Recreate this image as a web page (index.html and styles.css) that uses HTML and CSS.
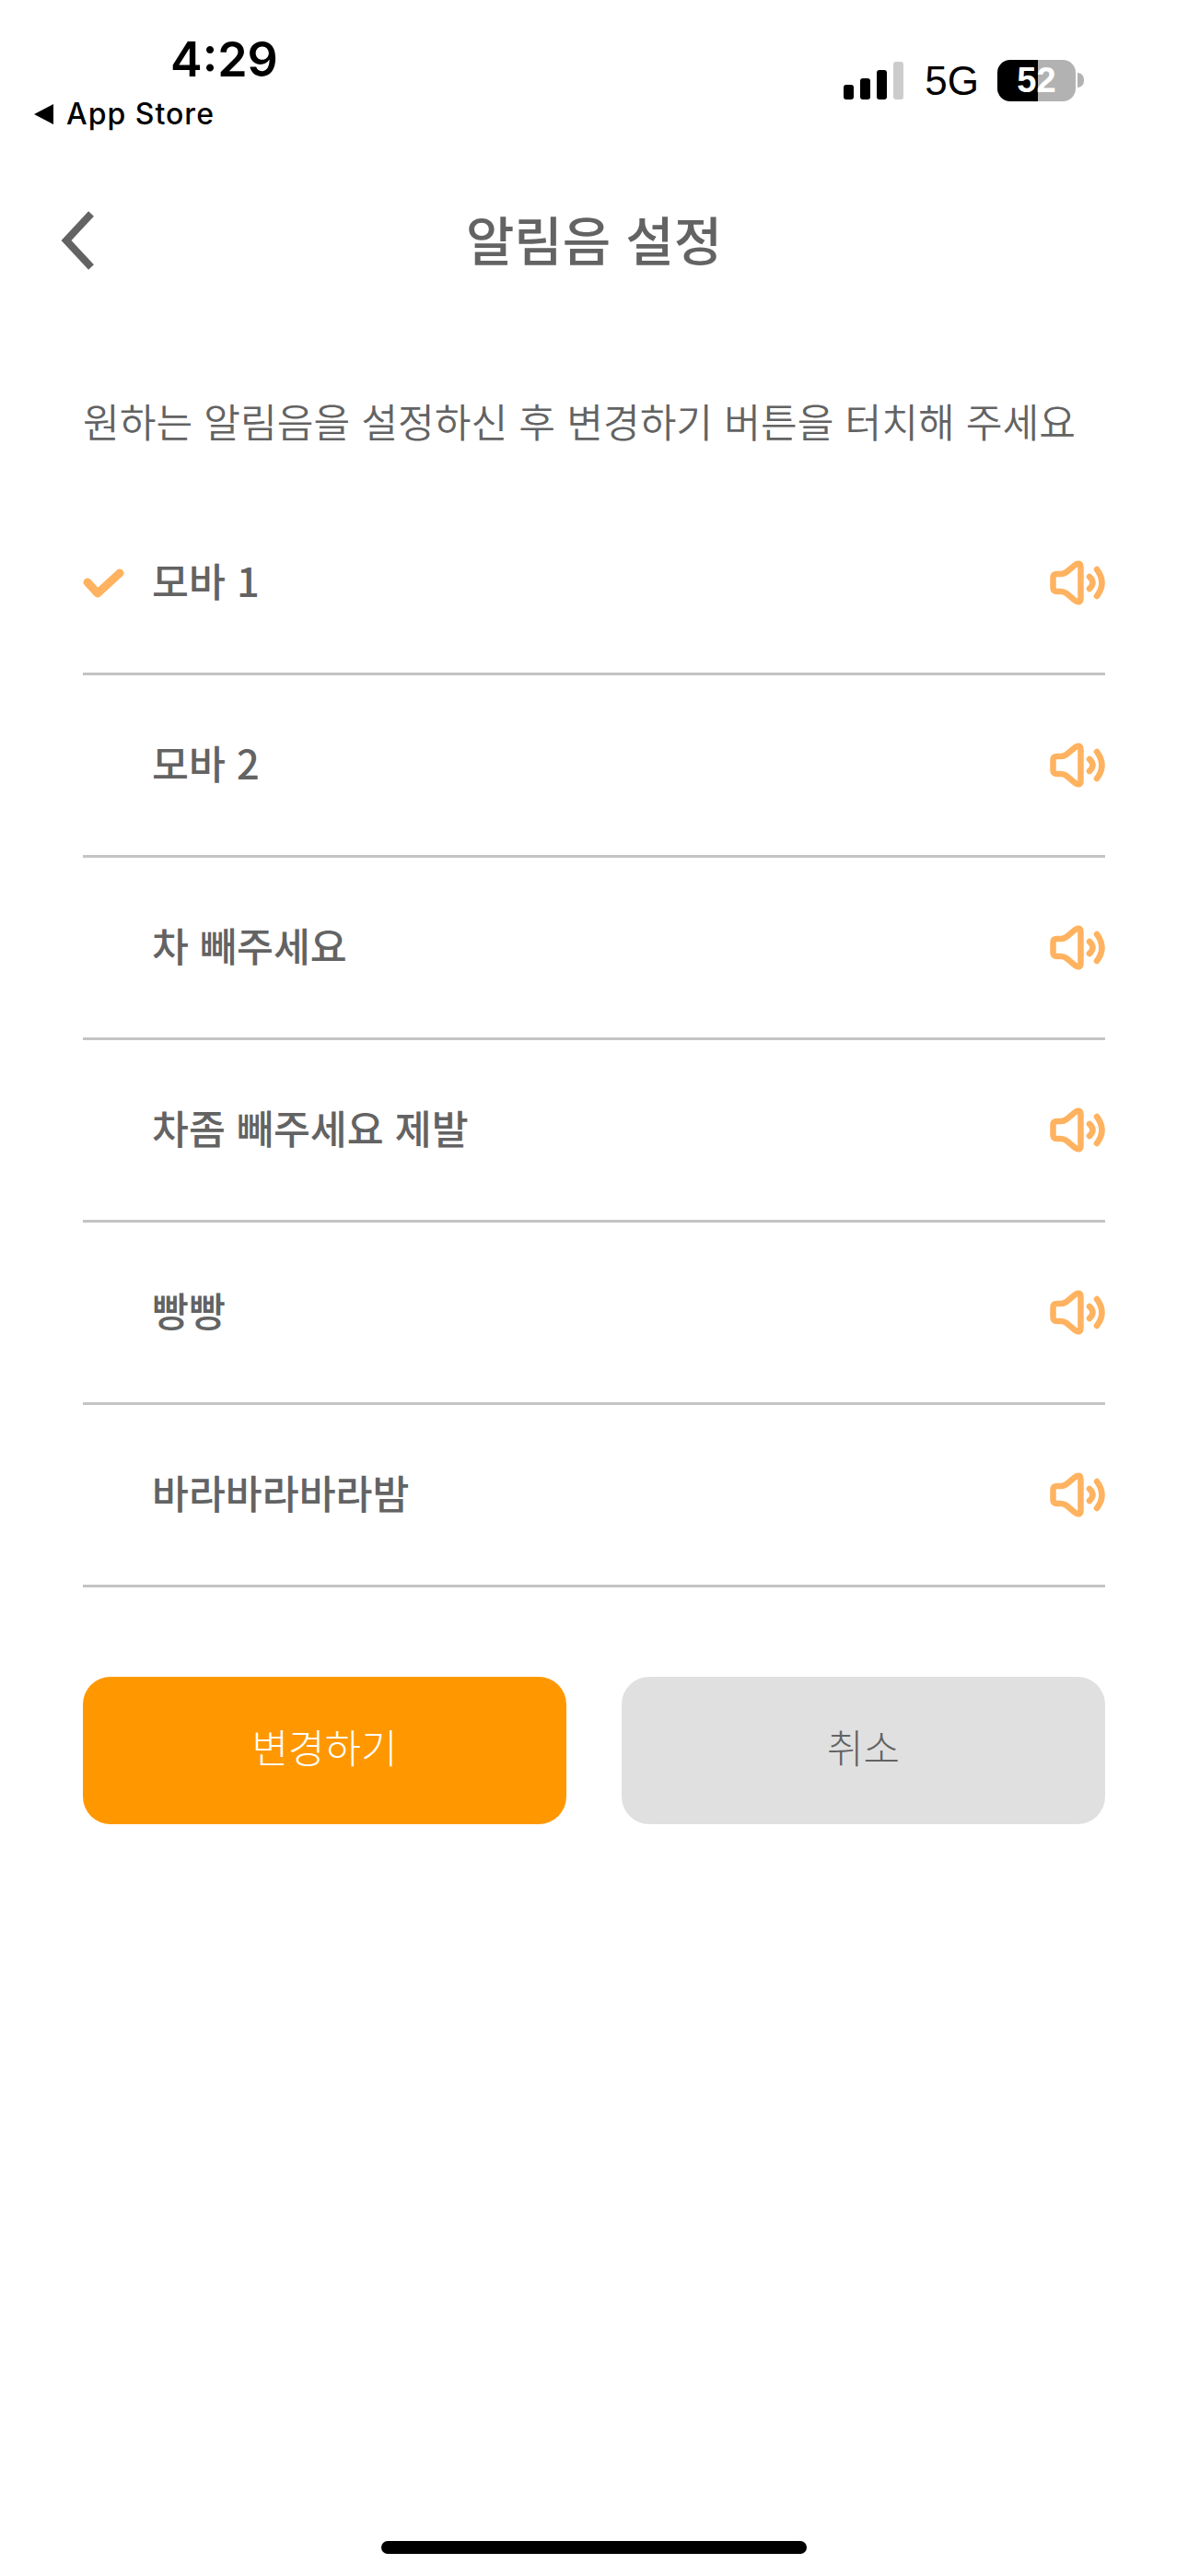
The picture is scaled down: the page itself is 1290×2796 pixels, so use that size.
FILE: index.html
```html
<!DOCTYPE html>
<html lang="ko">
<head>
    <meta charset="UTF-8">
    <meta name="viewport" content="width=device-width, initial-scale=1.0">
    <title>알림음 설정</title>
    <link rel="stylesheet" href="styles.css">
</head>
<body>
    <svg class="defs" width="0" height="0">
        <symbol id="speaker" viewBox="0 0 60 49">
            <path d="M3.500 19Q3.500 15 8 15H12Q15 15 18 13L27 5.500Q33.500 1 33.500 8V41Q33.500 48 27 43.500L18 36Q15 34 12 34H8Q3.500 34 3.500 30Z" fill="none" stroke="currentColor" stroke-width="6.500" stroke-linejoin="round"/>
            <path d="M43 18Q50 24.500 43 31" fill="none" stroke="currentColor" stroke-width="6.500" stroke-linecap="round"/>
            <path d="M51 10Q62 24.500 51 39" fill="none" stroke="currentColor" stroke-width="6.500" stroke-linecap="round"/>
        </symbol>
    </svg>

    <header class="status">
        <div class="status-left">
            <div class="time">4:29</div>
            <div class="back-app"><span class="tri"></span>App Store</div>
        </div>
        <div class="status-right">
            <div class="signal">
                <span class="bar b1"></span>
                <span class="bar b2"></span>
                <span class="bar b3"></span>
                <span class="bar b4"></span>
            </div>
            <span class="net">5G</span>
            <div class="battery">
                <div class="battery-body"><span class="num">52</span></div>
                <span class="battery-cap"></span>
            </div>
        </div>
    </header>

    <nav class="topbar">
        <svg class="back" viewBox="0 0 36 64" width="36" height="64">
            <path d="M33 3L6 32L33 61" fill="none" stroke="#636363" stroke-width="8"/>
        </svg>
        <h1>알림음 설정</h1>
    </nav>

    <main class="content">
        <p class="guide">원하는 알림음을 설정하신 후 변경하기 버튼을 터치해 주세요</p>

        <ul class="sounds">
            <li class="sound">
                <svg class="check" viewBox="0 0 46 34" width="46" height="34">
                    <path d="M5 16L16 28L40 6" fill="none" stroke="#ffb25f" stroke-width="9" stroke-linecap="round" stroke-linejoin="round"/>
                </svg>
                <span class="name">모바 1</span>
                <svg class="speaker"><use href="#speaker"/></svg>
            </li>
            <li class="sound"><span class="name">모바 2</span><svg class="speaker"><use href="#speaker"/></svg></li>
            <li class="sound"><span class="name">차 빼주세요</span><svg class="speaker"><use href="#speaker"/></svg></li>
            <li class="sound"><span class="name">차좀 빼주세요 제발</span><svg class="speaker"><use href="#speaker"/></svg></li>
            <li class="sound"><span class="name">빵빵</span><svg class="speaker"><use href="#speaker"/></svg></li>
            <li class="sound"><span class="name">바라바라바라밤</span><svg class="speaker"><use href="#speaker"/></svg></li>
        </ul>

        <div class="actions">
            <button class="btn btn-primary" type="button">변경하기</button>
            <button class="btn btn-cancel" type="button">취소</button>
        </div>
    </main>

    <div class="home-indicator"></div>
</body>
</html>
```

FILE: styles.css
```css
* {
    box-sizing: border-box;
}
html, body {
    margin: 0;
    padding: 0;
}
body {
    width: 1290px;
    height: 2796px;
    position: relative;
    overflow: hidden;
    background: #fff;
    color: #636363;
    font-family: "Noto Sans CJK KR", "Noto Sans", sans-serif;
}
.defs {
    position: absolute;
}

/* status bar */
.status {
    height: 178px;
    display: flex;
    justify-content: space-between;
    color: #000;
    font-family: Inter, "Liberation Sans", sans-serif;
}
.status-left {
    padding: 32px 0 0 37px;
}
.time {
    margin-left: 148px;
    font-size: 52px;
    line-height: 66px;
    font-weight: 600;
}
.back-app {
    display: flex;
    align-items: center;
    margin-top: 6px;
    font-size: 32px;
    line-height: 40px;
    font-weight: 500;
    letter-spacing: 1px;
}
.tri {
    width: 0;
    height: 0;
    margin-right: 14px;
    border-style: solid;
    border-width: 11px 21px 11px 0;
    border-color: transparent #000 transparent transparent;
}
.status-right {
    display: flex;
    align-items: center;
    height: 46px;
    margin: 64px 0 0;
    padding-right: 113px;
}
.signal {
    display: flex;
    align-items: flex-end;
    gap: 7px;
    height: 41px;
}
.bar {
    width: 11px;
    border-radius: 3px;
    background: #000;
}
.b1 { height: 16px; }
.b2 { height: 23px; }
.b3 { height: 32px; }
.b4 { height: 41px; background: #ccc; }
.net {
    margin-left: 23px;
    padding-top: 2px;
    font-family: "Liberation Sans", sans-serif;
    font-size: 44px;
    line-height: 46px;
}
.battery {
    display: flex;
    align-items: center;
    margin-left: 20px;
}
.battery-body {
    width: 85px;
    height: 45px;
    border-radius: 14px;
    background: linear-gradient(to right, #000 0, #000 44px, #b2b2b2 44px);
    text-align: center;
}
.num {
    color: #fff;
    font-family: "Liberation Sans", sans-serif;
    font-size: 38px;
    font-weight: 700;
    line-height: 45px;
}
.battery-cap {
    width: 7px;
    height: 16px;
    margin-left: 2px;
    border-radius: 0 8px 8px 0;
    background: #b2b2b2;
}

/* top bar */
.topbar {
    position: relative;
    height: 164px;
    text-align: center;
}
.back {
    position: absolute;
    left: 66px;
    top: 51px;
}
h1 {
    margin: 0;
    padding-bottom: 4px;
    font-size: 57px;
    line-height: 160px;
    font-weight: 500;
}

/* content */
.content {
    padding: 0 90px;
}
.guide {
    margin: 0;
    padding-top: 79px;
    height: 193px;
    font-size: 43.200px;
    line-height: 70px;
    font-weight: 350;
    white-space: nowrap;
}
.sounds {
    list-style: none;
    margin: 0;
    padding: 0;
}
.sound {
    position: relative;
    display: flex;
    align-items: center;
    justify-content: space-between;
    height: 198px;
    padding-left: 75px;
    border-bottom: 3px solid #c4c4c4;
}
.check {
    position: absolute;
    left: 0;
    top: 81px;
}
.name {
    margin-bottom: 7px;
    font-size: 43.400px;
    font-weight: 500;
}
.speaker {
    width: 60px;
    height: 49px;
    color: #ffb25f;
}

/* buttons */
.actions {
    display: flex;
    gap: 60px;
    margin-top: 97px;
}
.btn {
    flex: 1;
    height: 160px;
    padding: 0 0 10px;
    border: none;
    border-radius: 30px;
    font-family: inherit;
    font-size: 43px;
    font-weight: 300;
}
.btn-primary {
    background: #ff9800;
    color: #fff;
}
.btn-cancel {
    background: #e0e0e0;
    color: #636363;
}

.home-indicator {
    position: absolute;
    left: 414px;
    bottom: 24px;
    width: 462px;
    height: 14px;
    border-radius: 7px;
    background: #000;
}
```
